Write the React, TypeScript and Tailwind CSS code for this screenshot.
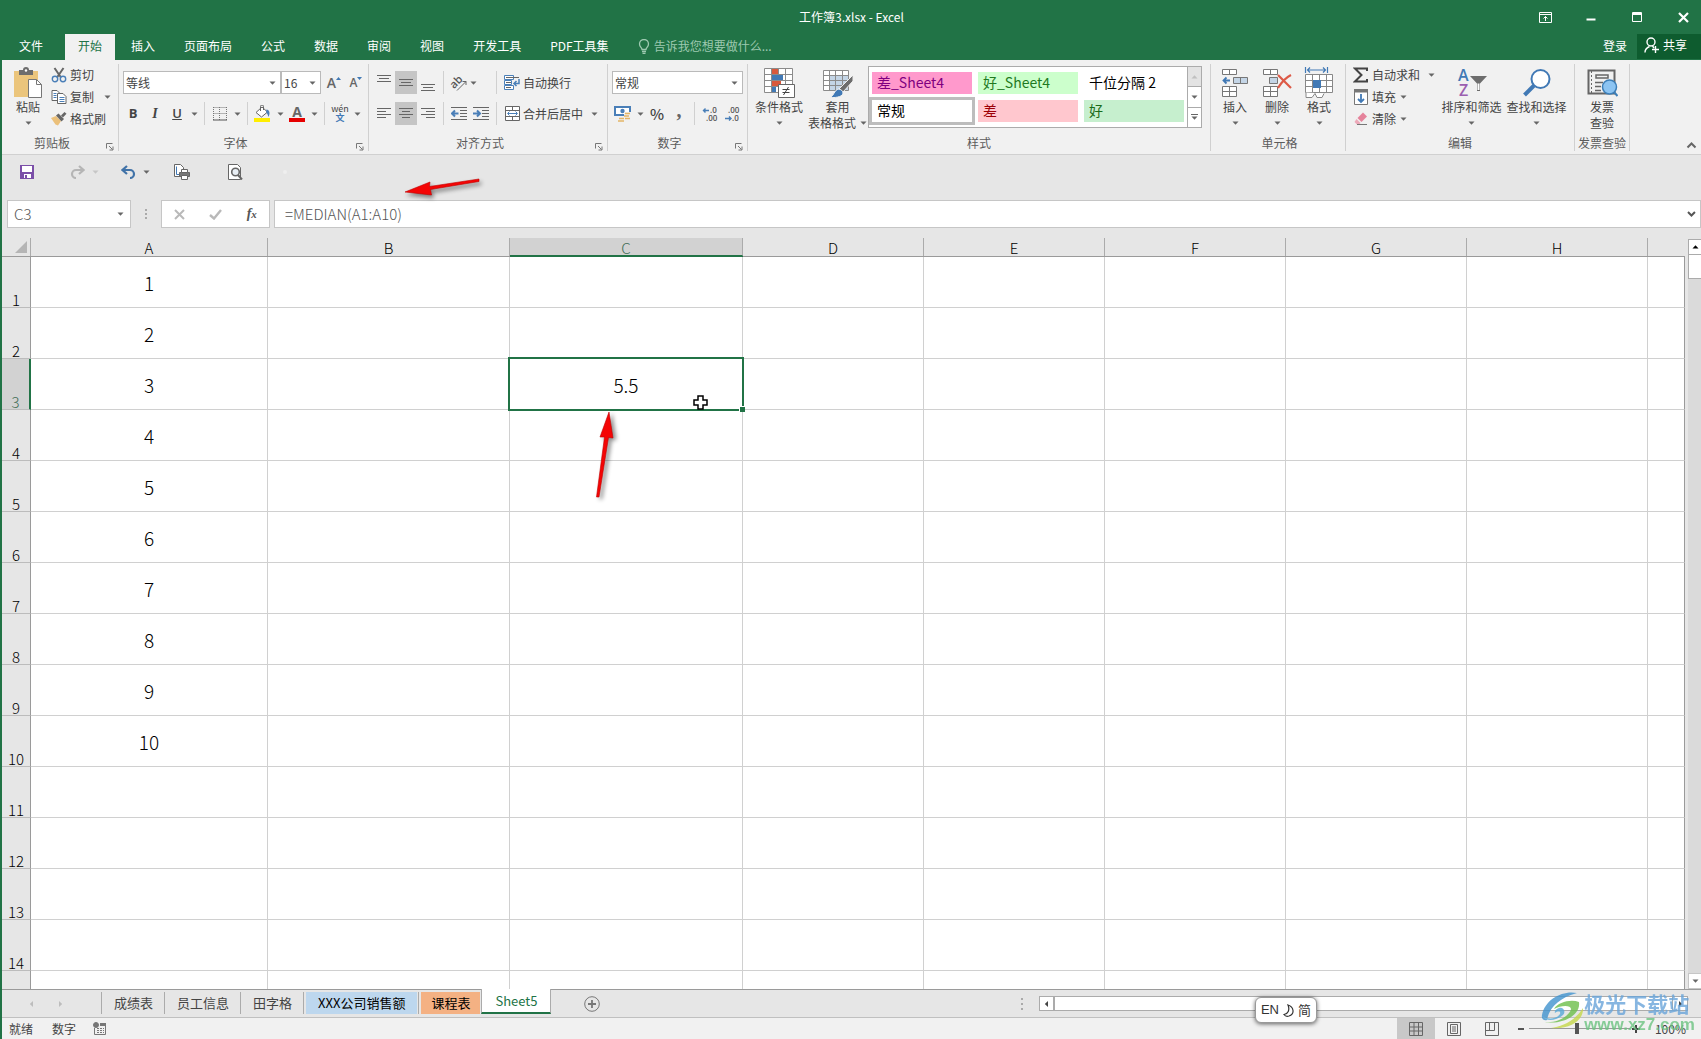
import React, { useState } from "react";
import clsx from "clsx";

const TABS = ["文件", "开始", "插入", "页面布局", "公式", "数据", "审阅", "视图", "开发工具", "PDF工具集"];

const COLUMNS = [
  { id: "A", width: "w-[237px]" },
  { id: "B", width: "w-[242px]" },
  { id: "C", width: "w-[233px]" },
  { id: "D", width: "w-[181px]" },
  { id: "E", width: "w-[181px]" },
  { id: "F", width: "w-[181px]" },
  { id: "G", width: "w-[181px]" },
  { id: "H", width: "w-[181px]" },
  { id: "", width: "" },
];

const ROWS = Array.from({ length: 14 }, (_, i) => i + 1);

const CELLS: Record<string, string> = {
  A1: "1", A2: "2", A3: "3", A4: "4", A5: "5",
  A6: "6", A7: "7", A8: "8", A9: "9", A10: "10",
  C3: "5.5",
};

const STYLES = [
  { name: "差_Sheet4", className: "bg-[#ff99cc] text-[#800080]" },
  { name: "好_Sheet4", className: "bg-[#ccffcc] text-[#1f7a1f]" },
  { name: "千位分隔 2", className: "bg-white text-black" },
  { name: "常规", className: "bg-white text-black outline-3 outline-[#bdbdbd]" },
  { name: "差", className: "bg-[#ffc7ce] text-[#9c0006]" },
  { name: "好", className: "bg-[#c6efce] text-[#1a6b1a]" },
];

const SHEETS = [
  { name: "成绩表", className: "px-[10px]" },
  { name: "员工信息", className: "px-[10px]" },
  { name: "田字格", className: "px-[10px]" },
  { name: "XXX公司销售额", className: "bg-[#bdd7ee] px-3 text-black" },
  { name: "课程表", className: "bg-[#f4b183] px-[10px] text-black" },
];

const Caret = ({ className = "text-[#666]" }: { className?: string }) => (
  <svg width="7" height="4" viewBox="0 0 7 4" className={clsx("shrink-0", className)} fill="currentColor">
    <path d="M0.5 0.5h6L3.5 3.7z" />
  </svg>
);

const Sep = () => <span className="mx-1 h-[23px] w-px shrink-0 bg-[#d0d0d0]" />;

const DropArrow = ({ label }: { label: string }) => (
  <button aria-label={label} className="flex h-[23px] w-3 items-center justify-center">
    <Caret />
  </button>
);

const Tool = ({ label, active, children }: { label: string; active?: boolean; children: React.ReactNode }) => (
  <button
    aria-label={label}
    className={clsx("flex h-[23px] w-[22px] shrink-0 items-center justify-center", active && "bg-[#c5c5c5]")}
  >
    {children}
  </button>
);

const Group = ({
  label,
  launcher,
  className,
  children,
}: {
  label: string;
  launcher?: boolean;
  className?: string;
  children: React.ReactNode;
}) => (
  <section className={clsx("flex shrink-0 flex-col border-r border-[#d0d0d0]", className)}>
    <div className="flex h-[70px]">{children}</div>
    <div className="flex h-[17px] items-center">
      <span className={clsx("flex-1 text-center text-[#5c5c5c]", launcher && "pr-1")}>{label}</span>
      {launcher && (
        <button aria-label={label + "设置"} className="mt-2 w-3">
          <svg width="8" height="8" viewBox="0 0 8 8" fill="none" stroke="#777">
            <path d="M0.5 5.5v-5h6M3 3l3.5 3.5M7 3.5v3.5H3.5" />
          </svg>
        </button>
      )}
    </div>
  </section>
);

const BigButton = ({
  icon,
  label,
  second,
  className,
}: {
  icon: React.ReactNode;
  label: string;
  second?: React.ReactNode;
  className?: string;
}) => (
  <button className={clsx("flex shrink-0 flex-col items-center pt-[3px]", className)}>
    <span className="flex h-8 items-center">{icon}</span>
    <span className="h-4 leading-4 whitespace-nowrap">{label}</span>
    <span className="flex h-[15px] items-center justify-center leading-[15px] whitespace-nowrap">
      {second ?? <Caret />}
    </span>
  </button>
);

const SmallButton = ({ icon, label, arrow }: { icon: React.ReactNode; label: string; arrow?: string }) => (
  <button className="flex h-[22px] items-center whitespace-nowrap">
    <span className="mr-[3px] flex w-4 justify-center">{icon}</span>
    {label}
    {arrow && (
      <span className={arrow}>
        <Caret />
      </span>
    )}
  </button>
);

const Lines = ({ d }: { d: string }) => (
  <svg width="16" height="18" viewBox="0 0 16 18" fill="none" stroke="#666">
    <path d={d} />
  </svg>
);

const PasteIcon = () => (
  <svg width="30" height="32" viewBox="0 0 30 32">
    <path d="M1 4h24v26H1z" fill="#ebc57c" />
    <path d="M6 3h4a3 3 0 0 1 6 0h4v5H6z" fill="#6d6d6d" />
    <circle cx="13" cy="3.5" r="1.2" fill="#fff" />
    <path d="M15.500 12.500h8l5 5v13h-13z" fill="#fff" stroke="#777" />
    <path d="M23.500 12.500v5h5" fill="none" stroke="#777" />
  </svg>
);

const CutIcon = () => (
  <svg width="16" height="16" viewBox="0 0 16 16" fill="none">
    <path d="M3.500 1l6.500 9.500M12.500 1L6 10.500" stroke="#666" strokeWidth="2" />
    <circle cx="4" cy="12" r="2.700" stroke="#4a7fb8" strokeWidth="1.400" />
    <circle cx="12" cy="12" r="2.700" stroke="#4a7fb8" strokeWidth="1.400" />
  </svg>
);

const CopyIcon = () => (
  <svg width="16" height="14" viewBox="0 0 16 14" fill="#fff" stroke="#666">
    <path d="M1 0.500h5l2.500 2.500v7.500H1z" />
    <path d="M2.500 3.500h3M2.500 5.500h3M2.500 7.500h3" stroke="#4a7fb8" />
    <path d="M6.500 3.500h5.500l3 3v7h-8.500z" />
    <path d="M8.500 7.500h5M8.500 9.500h5M8.500 11.500h5" stroke="#4a7fb8" />
  </svg>
);

const BrushIcon = () => (
  <svg width="16" height="14" viewBox="0 0 16 14">
    <path d="M0 6l5-2 5 5-3 4.500-2.500-1z" fill="#ebc07a" />
    <path d="M5 3.500l2.500-2 5.500 5.500-2.500 2.500z" fill="#666" />
    <path d="M10 3.500l3.500-3.500 2 1.800-3.500 3.700z" fill="#666" />
  </svg>
);

const BorderIcon = () => (
  <svg width="14" height="14" viewBox="0 0 14 14" fill="none" stroke="#777">
    <path d="M0.500 0.500h13M0.500 6.500h13M0.500 0v13M6.500 0v13M13.500 0v13" strokeDasharray="1 1" />
    <path d="M0 13h14" stroke="#555" />
  </svg>
);

const FillIcon = () => (
  <svg width="18" height="18" viewBox="0 0 18 18">
    <path d="M0 13h16v4H0z" fill="#ffee00" />
    <path d="M2 7.500L8 2l5.500 5-6 5z" fill="#fff" stroke="#666" />
    <path d="M6.500 6V1.500a1.500 1.500 0 0 1 3 0V5" fill="none" stroke="#666" />
    <path d="M12.500 4.500c3 .5 4 3.500 2 7.500-.8-2-1-3.500-2.500-5z" fill="#4a7fb8" />
  </svg>
);

const FontColorIcon = () => (
  <span className="flex flex-col items-center">
    <span className="font-[Open_Sans] text-sm leading-[13px] font-bold text-[#666]">A</span>
    <span className="h-1 w-4 bg-[#e60000]" />
  </span>
);

const WrapIcon = () => (
  <svg width="16" height="16" viewBox="0 0 16 16" fill="none" stroke="#4a7fb8">
    <path d="M0.500 0.500h9v4h-9zM0.500 5.500h7v4h-7zM0.500 10.500h9v4h-9z" fill="#fff" />
    <path d="M2 2.500h13M2 7.500h5M2 12.500h5" stroke="#666" />
    <path d="M15 4v4.500h-5M12.500 6L10 8.500l2.500 2.500" strokeWidth="1.500" />
  </svg>
);

const MergeIcon = () => (
  <svg width="15" height="15" viewBox="0 0 15 15" fill="none" stroke="#666">
    <path d="M0.500 0.500h14v14h-14z" fill="#fff" />
    <path d="M0.500 4.500h14M0.500 10.500h14M7.500 0.500v4M7.500 10.500v4" />
    <path d="M3 7.500h9M4.500 5.500l-2 2 2 2M10.500 5.500l2 2-2 2" stroke="#4a7fb8" />
  </svg>
);

const IndentIcon = ({ out }: { out?: boolean }) => (
  <svg width="16" height="15" viewBox="0 0 16 15" fill="none" stroke="#666">
    <path d="M0 1.500h16M9 4.500h7M9 7.500h7M9 10.500h7M0 13.500h16" />
    <path d={out ? "M7.500 7.500h-6M4 4.500l-3 3 3 3" : "M0 7.500h6M4 4.500l3 3-3 3"} stroke="#4a7fb8" strokeWidth="2" />
  </svg>
);

const OrientationIcon = () => (
  <svg width="18" height="18" viewBox="0 0 18 18" fill="none" stroke="#666" className="overflow-visible">
    <text x="0" y="12" fontSize="11" fontFamily="Open Sans" fontWeight="600" fill="#555" stroke="none" transform="rotate(-45 6 9)">
      ab
    </text>
    <path d="M7 16.500l9-9M12.500 7.500H16V11" />
  </svg>
);

const MoneyIcon = () => (
  <svg width="18" height="16" viewBox="0 0 18 16">
    <path d="M1 1h15v8H1z" fill="#fff" stroke="#4a7fb8" strokeWidth="2" />
    <circle cx="8.500" cy="5" r="2.200" fill="#4a7fb8" />
    <path d="M10 6h7v10h-7z" fill="#f0f0f0" />
    <path d="M11 7.500h5M10 10h5M11 12.500h5M5 12.500h5M4 15h6" stroke="#e3b567" strokeWidth="1.600" />
  </svg>
);

const DecimalIcon = ({ grow }: { grow?: boolean }) => (
  <svg width="18" height="18" viewBox="0 0 18 18" fontFamily="Open Sans" fontSize="8" fontWeight="600" fill="#555" className="overflow-visible">
    <text x={grow ? 9 : 5} y="8">{grow ? ".0" : ".00"}</text>
    <text x={grow ? 5 : 9} y="16">{grow ? ".00" : ".0"}</text>
    <path
      d={grow ? "M8 5.500H2.500M4.500 3.500l-2 2 2 2" : "M2 13.500h6M6 11.500l2 2-2 2"}
      fill="none"
      stroke="#4a7fb8"
      strokeWidth="1.400"
    />
  </svg>
);

const ConditionalIcon = () => (
  <svg width="32" height="32" viewBox="0 0 32 32">
    <path d="M1.500 1.500h28v24h-28z" fill="#fff" />
    <path d="M9 1.500h6v6H9z" fill="#d9593c" />
    <path d="M9 8h11v5H9z" fill="#4179b5" />
    <path d="M9 13.500h9v6H9z" fill="#d9593c" />
    <path d="M9 19.500h4v6H9z" fill="#4179b5" />
    <path d="M1.500 1.500h28v24h-28zM1.500 7.500h28M1.500 13.500h28M1.500 19.500h28M8.500 1.500v24M15.500 1.500v6M22.500 1.500v24" fill="none" stroke="#8b8b8b" />
    <path d="M15.500 17.500h16v13h-16z" fill="#fff" stroke="#666" />
    <path d="M19.500 22.500h7M19.500 25.500h7M25.500 20l-5 8" stroke="#444" fill="none" />
  </svg>
);

const TableFormatIcon = () => (
  <svg width="32" height="32" viewBox="0 0 32 32">
    <path d="M1.500 3.500h25v20h-25z" fill="#fff" />
    <path d="M7.500 8.500h19v15h-19z" fill="#c4d5e6" />
    <path d="M1.500 3.500h25v20h-25zM1.500 8.500h25M1.500 13.500h25M1.500 18.500h25M7.500 3.500v20M13.500 3.500v20M20.500 3.500v20" fill="none" stroke="#8b8b8b" />
    <path d="M31 8v6L21 25l-4-3z" fill="#6d6d6d" stroke="#f0f0f0" />
    <path d="M16 22c3 0 5 2 5 4 0 3-5 5-13 4.500 4-1.500 4-7 8-8.500z" fill="#4179b5" stroke="#f0f0f0" />
  </svg>
);

const InsertCellsIcon = () => (
  <svg width="28" height="30" viewBox="0 0 28 30" fill="#fff" stroke="#777">
    <path d="M1.500 1.500h14v5h-14zM8.500 1.500v5" />
    <path d="M12.500 9.500h14v6h-14zM19.500 9.500v6" fill="#c4d5e6" />
    <path d="M9 12.500H2.500M5.500 9.500l-3 3 3 3" fill="none" stroke="#4179b5" strokeWidth="1.800" />
    <path d="M1.500 18.500h14v10h-14zM8.500 18.500v10M1.500 23.500h14" />
  </svg>
);

const DeleteCellsIcon = () => (
  <svg width="31" height="30" viewBox="0 0 31 30" fill="#fff" stroke="#777">
    <path d="M1.500 1.500h14v5h-14zM8.500 1.500v5" />
    <path d="M7.500 9.500h8v6h-8z" fill="#c4d5e6" />
    <path d="M1.500 18.500h14v10h-14zM8.500 18.500v10M1.500 23.500h14" />
    <path d="M16 7l13 13M29 7c-6 3-10 8-13 13" fill="none" stroke="#dd5a47" strokeWidth="2.200" />
  </svg>
);

const FormatCellsIcon = () => (
  <svg width="30" height="32" viewBox="0 0 30 32" fill="#fff" stroke="#888">
    <path d="M1.500 7.500h27v18h-27zM1.500 13.500h27M1.500 19.500h27M8.500 7.500v18M15.500 7.500v18M22.500 7.500v18" />
    <path d="M9 13h8v8H9z" fill="#4179b5" stroke="none" />
    <path d="M2 25.500v5h6l3-4 2 4h5l2-4" />
    <path d="M1.500 0v6M23.500 0v6M3 3h19M6 0.500L3.500 3 6 5.500M19 0.500L21.500 3 19 5.500" fill="none" stroke="#4179b5" strokeWidth="1.200" />
  </svg>
);

const SumIcon = () => (
  <svg width="16" height="16" viewBox="0 0 16 16" fill="none" stroke="#444" strokeWidth="2">
    <path d="M14 4V1.500H2L8.500 8 2 14.500h12V12" />
  </svg>
);

const FillDownIcon = () => (
  <svg width="14" height="16" viewBox="0 0 14 16" fill="none">
    <path d="M0.500 1.500h13v14h-13z" fill="#fff" stroke="#777" />
    <path d="M0 0h14v3.500H0z" fill="#777" />
    <path d="M7 5v8M4 10l3 3 3-3" stroke="#4179b5" strokeWidth="1.800" />
  </svg>
);

const EraserIcon = () => (
  <svg width="14" height="14" viewBox="0 0 14 14">
    <path d="M9 0.500l4 4-5.500 5.500-4-4z" fill="#e5839b" />
    <path d="M2.500 7l4 4-1.500 1.500H3L0.500 10z" fill="#eda9b9" />
    <path d="M3 12.500h10" stroke="#777" />
  </svg>
);

const SortFilterIcon = () => (
  <svg width="30" height="30" viewBox="0 0 30 30" fontFamily="Open Sans" fontSize="16" fontWeight="600" className="overflow-visible">
    <text x="1" y="13" fill="#4179b5">A</text>
    <text x="2" y="28" fill="#9b5fb0">Z</text>
    <path d="M13 8h17l-7 7.500V23h-3v-7.500z" fill="#6d6d6d" />
    <path d="M20.500 15.500h2v6.500h-2z" fill="#fff" />
  </svg>
);

const FindIcon = () => (
  <svg width="28" height="30" viewBox="0 0 28 30" fill="none" stroke="#4179b5">
    <circle cx="17.500" cy="11" r="9" fill="#fff" strokeWidth="2" />
    <path d="M11 17.500l-9.500 9.500" strokeWidth="4" />
  </svg>
);

const InvoiceIcon = () => (
  <svg width="31" height="28" viewBox="0 0 31 28" fill="none" stroke="#666">
    <path d="M1.500 1.500h26v23h-26z" strokeWidth="2" />
    <path d="M4.500 2v22" strokeDasharray="2 2" />
    <path d="M9 6h12v3H9z" strokeWidth="1.500" />
    <path d="M8 13.500h8M8 17.500h6M8 21.500h6" strokeWidth="1.500" />
    <circle cx="22.500" cy="18" r="7" fill="#8cc4f2" stroke="#3d7fb8" strokeWidth="1.500" />
    <path d="M27 23l3.500 4" stroke="#3d7fb8" strokeWidth="2" />
  </svg>
);

const SelectBox = ({ label, options, className }: { label: string; options: string[]; className: string }) => (
  <label className={clsx("relative flex h-[23px] items-center border border-[#bababa] bg-white", className)}>
    <select aria-label={label} className="h-full w-full appearance-none bg-transparent pl-[2px] text-[#444] outline-none">
      {options.map((o) => (
        <option key={o}>{o}</option>
      ))}
    </select>
    <span className="pointer-events-none absolute right-1">
      <Caret />
    </span>
  </label>
);

const Watermark = () => (
  <div className="pointer-events-none absolute right-[6px] bottom-1 flex items-center opacity-80">
    <svg width="43" height="40" viewBox="0 0 43 40" className="mb-1">
      <path d="M36 2C22-1 4 8 1 24c-1 4 2 6 5 5C8 16 20 6 36 2z" fill="#4093cf" />
      <path d="M1 25c4 6 14 5 21-1 3-3 1-8-4-7-3 1-5 3-4 5 3-2 6-2 5 1-3 5-12 6-18 2z" fill="#57a8d8" />
      <path d="M38 11c-8-3-21 0-25 7 9-5 22-4 15 4-5 6-14 10-24 9 16 3 36-6 34-20z" fill="#6cbf4b" />
      <path d="M42 17c1 12-13 22-32 20 10-1 24-7 32-20z" fill="#c6d84a" />
    </svg>
    <div>
      <div className="text-[21px] leading-6 font-bold text-[#6aa5da]">极光下载站</div>
      <div className="font-[Liberation_Sans] text-[17px] leading-5 font-bold text-[#6cc381]">www.xz7.com</div>
    </div>
  </div>
);

function TitleBar() {
  const [tab, setTab] = useState("开始");
  return (
    <header className="bg-[#217346] text-white">
      <div className="grid h-[34px] grid-cols-[1fr_auto_1fr] items-center">
        <span />
        <h1>工作簿3.xlsx - Excel</h1>
        <div className="flex justify-end gap-[10px]">
          <button aria-label="功能区显示选项" className="flex w-9 justify-center">
            <svg width="13" height="11" viewBox="0 0 13 11" fill="none" stroke="#fff">
              <path d="M0.500 0.500h12v10H0.500zM0.500 2.500h12M6.500 9V4.500M4.500 6.500l2-2 2 2" />
            </svg>
          </button>
          <button aria-label="最小化" className="flex w-9 justify-center">
            <svg width="10" height="11" viewBox="0 0 10 11"><path d="M0.500 6.500h9v2h-9z" fill="#fff" /></svg>
          </button>
          <button aria-label="最大化" className="flex w-9 justify-center">
            <svg width="10" height="11" viewBox="0 0 10 11" fill="none" stroke="#fff">
              <path d="M0.500 0.500h9v9h-9zM0 1.500h10M0 2.500h10" />
            </svg>
          </button>
          <button aria-label="关闭" className="flex w-9 justify-center">
            <svg width="11" height="11" viewBox="0 0 11 11" stroke="#fff" strokeWidth="2.200">
              <path d="M1 1l9 9M10 1l-9 9" />
            </svg>
          </button>
        </div>
      </div>
      <div className="flex h-[26px] pl-1">
        <nav className="flex gap-[3px]">
          {TABS.map((name) => (
            <button
              key={name}
              onClick={() => setTab(name)}
              className={clsx(
                "px-[13px] pb-[3px] whitespace-nowrap",
                name === "文件" && "mr-[6px]",
                tab === name && "bg-[#f1f1f1] text-[#217346]"
              )}
            >
              {name}
            </button>
          ))}
        </nav>
        <label className="ml-4 flex items-center gap-1 pb-[2px] text-[#9dc9b0]">
          <svg width="12" height="15" viewBox="0 0 12 15" fill="none" stroke="currentColor" strokeWidth="1.300">
            <path d="M4 10.500C4 8.500 1.500 8 1.500 5a4.500 4.500 0 0 1 9 0c0 3-2.500 3.500-2.500 5.500zM4 12.500h4M4.500 14.300h3" />
          </svg>
          <input aria-label="操作说明搜索" placeholder="告诉我您想要做什么..." className="w-40 bg-transparent outline-none placeholder:text-[#9dc9b0]" />
        </label>
        <div className="ml-auto flex">
          <button className="px-[10px] pb-[3px]">登录</button>
          <button className="mb-px flex w-16 items-center gap-1 bg-[#0e5c2f] pb-[3px] pl-[7px]">
            <svg width="15" height="16" viewBox="0 0 15 16" fill="none" stroke="#fff" strokeWidth="1.400">
              <circle cx="7" cy="5" r="4" />
              <path d="M1 15.500c0-3 2-5 4.500-6M8.500 9l1.500 2M8 12.500h7M11.500 9v7" />
            </svg>
            共享
          </button>
        </div>
      </div>
    </header>
  );
}

function Ribbon() {
  return (
    <div className="flex h-[95px] border-b border-[#d0d0d0] bg-[#f1f1f1] pt-1 pb-[3px] text-[#444]">
      <Group label="剪贴板" launcher className="w-[117px]">
        <BigButton icon={<PasteIcon />} label="粘贴" className="ml-[10px] w-8" />
        <div className="ml-[7px] flex flex-col items-start">
          <SmallButton icon={<CutIcon />} label="剪切" />
          <SmallButton icon={<CopyIcon />} label="复制" arrow="ml-[10px]" />
          <SmallButton icon={<BrushIcon />} label="格式刷" />
        </div>
      </Group>

      <Group label="字体" launcher className="w-[250px]">
        <div className="flex flex-col gap-2 px-[3px] pt-[7px]">
          <div className="flex">
            <SelectBox label="字体" options={["等线", "宋体"]} className="ml-px w-[158px]" />
            <SelectBox label="字号" options={["16", "11"]} className="mr-[2px] w-10" />
            <Tool label="增大字号">
              <span className="font-[Open_Sans] text-sm font-semibold text-[#666]">A</span>
              <svg width="5" height="12" viewBox="0 0 5 12" fill="#4179b5"><path d="M0 3h5L2.500 0z" /></svg>
            </Tool>
            <Tool label="减小字号">
              <span className="font-[Open_Sans] text-xs font-semibold text-[#666]">A</span>
              <svg width="5" height="12" viewBox="0 0 5 12" fill="#4179b5"><path d="M0 0h5L2.500 3z" /></svg>
            </Tool>
          </div>
          <div className="flex">
            <Tool label="加粗"><b className="font-[Open_Sans] text-[13px]">B</b></Tool>
            <Tool label="倾斜"><i className="font-[Liberation_Serif] text-sm font-bold">I</i></Tool>
            <Tool label="下划线"><u className="font-[Open_Sans] text-[13px] font-semibold">U</u></Tool>
            <DropArrow label="下划线选项" />
            <Sep />
            <Tool label="边框"><BorderIcon /></Tool>
            <DropArrow label="边框选项" />
            <Sep />
            <Tool label="填充颜色"><FillIcon /></Tool>
            <DropArrow label="填充颜色选项" />
            <Tool label="字体颜色"><FontColorIcon /></Tool>
            <DropArrow label="字体颜色选项" />
            <Sep />
            <Tool label="拼音">
              <span className="flex flex-col items-center">
                <span className="text-[9px] leading-[8px]">wén</span>
                <span className="text-[9px] leading-[9px] font-bold text-[#4179b5]">文</span>
              </span>
            </Tool>
            <DropArrow label="拼音选项" />
          </div>
        </div>
      </Group>

      <Group label="对齐方式" launcher className="w-[239px]">
        <div className="flex flex-col gap-2 pt-[7px] pl-1">
          <div className="flex items-center">
            <Tool label="顶端对齐"><Lines d="M1 1.500h14M3 4.500h10M1 7.500h14" /></Tool>
            <Tool label="垂直居中" active><Lines d="M1 5.500h14M3 8.500h10M1 11.500h14" /></Tool>
            <Tool label="底端对齐"><Lines d="M1 10.500h14M3 13.500h10M1 16.500h14" /></Tool>
            <Sep />
            <Tool label="方向"><OrientationIcon /></Tool>
            <span className="flex w-[22px]"><Caret /></span>
            <Sep />
            <span className="w-[3px]" />
            <SmallButton icon={<WrapIcon />} label="自动换行" />
          </div>
          <div className="flex items-center">
            <Tool label="左对齐"><Lines d="M1 3.500h14M1 6.500h9M1 9.500h14M1 12.500h9" /></Tool>
            <Tool label="居中" active><Lines d="M1 3.500h14M4 6.500h8M1 9.500h14M4 12.500h8" /></Tool>
            <Tool label="右对齐"><Lines d="M1 3.500h14M6 6.500h9M1 9.500h14M6 12.500h9" /></Tool>
            <Sep />
            <Tool label="减少缩进量"><IndentIcon out /></Tool>
            <Tool label="增加缩进量"><IndentIcon /></Tool>
            <Sep />
            <span className="w-[3px]" />
            <SmallButton icon={<MergeIcon />} label="合并后居中" arrow="ml-2" />
          </div>
        </div>
      </Group>

      <Group label="数字" launcher className="w-[140px]">
        <div className="flex flex-col gap-2 pt-[7px] pl-1">
          <SelectBox label="数字格式" options={["常规", "数值"]} className="w-[131px]" />
          <div className="flex">
            <Tool label="会计数字格式"><MoneyIcon /></Tool>
            <DropArrow label="会计格式选项" />
            <Tool label="百分比"><span className="text-[15px] font-medium">%</span></Tool>
            <Tool label="千位分隔"><span className="pb-2 font-[Liberation_Serif] text-xl leading-3 font-bold text-[#666]">,</span></Tool>
            <Sep />
            <Tool label="增加小数位"><DecimalIcon grow /></Tool>
            <Tool label="减少小数位"><DecimalIcon /></Tool>
          </div>
        </div>
      </Group>

      <Group label="样式" className="w-[463px]">
        <BigButton icon={<ConditionalIcon />} label="条件格式" className="ml-[3px] w-14" />
        <BigButton
          icon={<TableFormatIcon />}
          label="套用"
          className="w-[61px]"
          second={<>表格格式<span className="ml-1"><Caret /></span></>}
        />
        <div className="mt-[2px] flex h-[62px] border border-[#ababab] bg-white">
          <div className="grid grid-cols-3 gap-[6px] px-[3px] py-[5px]">
            {STYLES.map((s) => (
              <button key={s.name} className={clsx("h-[22px] w-[100px] pb-[2px] pl-[5px] text-left text-sm leading-5", s.className)}>
                {s.name}
              </button>
            ))}
          </div>
          <div className="flex w-[14px] flex-col border-l border-[#ababab]">
            <button aria-label="上一行" className="flex flex-1 items-center justify-center bg-[#e3e3e3]">
              <Caret className="rotate-180 text-[#c0c0c0]" />
            </button>
            <button aria-label="下一行" className="flex flex-1 items-center justify-center border-y border-[#ababab]"><Caret /></button>
            <button aria-label="其他样式" className="flex flex-1 flex-col items-center justify-center gap-px">
              <span className="h-px w-[7px] bg-[#666]" />
              <Caret />
            </button>
          </div>
        </div>
      </Group>

      <Group label="单元格" className="w-[135px] pl-[3px]">
        <BigButton icon={<InsertCellsIcon />} label="插入" className="w-[42px]" />
        <BigButton icon={<DeleteCellsIcon />} label="删除" className="w-[42px]" />
        <BigButton icon={<FormatCellsIcon />} label="格式" className="w-[42px]" />
      </Group>

      <Group label="编辑" className="w-[229px]">
        <div className="flex w-[93px] flex-col items-start pl-[7px]">
          <SmallButton icon={<SumIcon />} label="自动求和" arrow="ml-2" />
          <SmallButton icon={<FillDownIcon />} label="填充" arrow="ml-1" />
          <SmallButton icon={<EraserIcon />} label="清除" arrow="ml-1" />
        </div>
        <BigButton icon={<SortFilterIcon />} label="排序和筛选" className="w-[65px]" />
        <BigButton icon={<FindIcon />} label="查找和选择" className="w-[65px]" />
      </Group>

      <Group label="发票查验" className="w-[55px]">
        <BigButton icon={<InvoiceIcon />} label="发票" second="查验" className="w-full" />
      </Group>

      <button aria-label="折叠功能区" className="mt-auto mr-1 mb-[2px] ml-auto">
        <svg width="11" height="7" viewBox="0 0 11 7" fill="none" stroke="#666" strokeWidth="2"><path d="M1.500 5.500l4-4 4 4" /></svg>
      </button>
    </div>
  );
}

function QuickAccess() {
  return (
    <div className="relative flex h-[35px] items-center pb-[2px] pl-[18px]">
      <button aria-label="保存">
        <svg width="14" height="14" viewBox="0 0 14 14">
          <path d="M0 0h14v14H0z" fill="#7b4fa8" />
          <path d="M2 1h10v6H2zM4 9h7v4H4z" fill="#fff" />
          <path d="M5 10h2v3H5z" fill="#7b4fa8" />
        </svg>
      </button>
      <button aria-label="恢复" className="ml-9 flex items-center gap-[7px] text-[#b5b5b5]">
        <svg width="15" height="14" viewBox="0 0 15 14" fill="none" stroke="currentColor" strokeWidth="2.200">
          <path d="M13 5H6a4 4 0 0 0 0 8M9 1l4.500 4L9 9" />
        </svg>
        <Caret className="text-[#c6c6c6]" />
      </button>
      <button aria-label="撤消" className="ml-[22px] flex items-center gap-[7px] text-[#4173a8]">
        <svg width="15" height="14" viewBox="0 0 15 14" fill="none" stroke="currentColor" strokeWidth="2.200">
          <path d="M2 5h7a4 4 0 0 1 0 8M6 1L1.500 5 6 9" />
        </svg>
        <Caret />
      </button>
      <button aria-label="打印" className="ml-[23px]">
        <svg width="17" height="16" viewBox="0 0 17 16" fill="#fff" stroke="#666">
          <path d="M1.500 0.500h6l3 3v9h-9z" />
          <path d="M3.500 2.500v8h3" stroke="#4179b5" fill="none" />
          <path d="M6.500 8.500h10v4h-10z" fill="#777" />
          <path d="M8.500 5.500h6v3h-6zM8.500 11.500h6v4h-6z" />
        </svg>
      </button>
      <button aria-label="打印预览" className="ml-[38px]">
        <svg width="15" height="16" viewBox="0 0 15 16" fill="#fff" stroke="#666">
          <path d="M0.500 0.500h9l3 3v12h-12z" />
          <circle cx="7.500" cy="8" r="3.800" fill="#e8eef4" strokeWidth="1.600" />
          <path d="M10 11l4 4.500" strokeWidth="2" />
        </svg>
      </button>
      <span className="ml-10 h-1 w-1 rounded-full bg-[#efefef]" />
      {/* callout pointing at the formula */}
      <svg className="absolute top-[22px] left-[402px] drop-shadow-[2px_3px_2px_rgba(0,0,0,0.45)]" width="78" height="24" viewBox="0 0 78 24">
        <path d="M1 15L26 5l-.5 4.500L75 2v2.500L26.500 12.500l1 5.500z" fill="#f40505" stroke="#c00000" strokeWidth="0.600" />
      </svg>
    </div>
  );
}

function FormulaBar() {
  const [formula, setFormula] = useState("=MEDIAN(A1:A10)");
  return (
    <div className="mt-[10px] flex h-7 items-stretch text-[#555]">
      <label className="ml-[5px] flex w-[124px] items-center border border-[#c6c6c6] bg-white pr-[6px]">
        <input aria-label="名称框" defaultValue="C3" className="w-full min-w-0 bg-transparent pl-[6px] text-[15px] font-light outline-none" />
        <Caret />
      </label>
      <span className="flex w-[30px] flex-col items-center justify-center gap-[2px]">
        <i className="size-[2px] bg-[#aaa]" />
        <i className="size-[2px] bg-[#aaa]" />
        <i className="size-[2px] bg-[#aaa]" />
      </span>
      <div className="flex w-[109px] items-center justify-around border border-[#c6c6c6] bg-white">
        <button aria-label="取消">
          <svg width="11" height="11" viewBox="0 0 11 11" stroke="#b9b9b9" strokeWidth="2"><path d="M1 1l9 9M10 1l-9 9" /></svg>
        </button>
        <button aria-label="输入">
          <svg width="13" height="11" viewBox="0 0 13 11" fill="none" stroke="#b9b9b9" strokeWidth="2.400"><path d="M1 6l4 3.500L12 1" /></svg>
        </button>
        <button aria-label="插入函数" className="font-[Liberation_Serif] text-sm font-bold italic">
          f<span className="text-[11px]">x</span>
        </button>
      </div>
      <label className="ml-1 flex flex-1 items-center border border-[#c6c6c6] bg-white pr-1">
        <input
          aria-label="编辑栏"
          value={formula}
          onChange={(e) => setFormula(e.target.value)}
          className="w-full bg-transparent pl-[10px] text-[15px] font-light outline-none"
        />
        <svg width="9" height="6" viewBox="0 0 9 6" fill="none" stroke="#555" strokeWidth="2"><path d="M1 1l3.500 3.500L8 1" /></svg>
      </label>
    </div>
  );
}

const Selection = () => (
  <>
    <span className="absolute -top-[2px] -right-[2px] -bottom-[2px] -left-[2px] border-2 border-[#217346]" />
    <span className="absolute -right-[3px] -bottom-[3px] size-[6px] border-t border-l border-white bg-[#217346]" />
    <svg className="absolute top-[36px] left-[183px]" width="16" height="16" viewBox="0 0 16 16">
      <path d="M5 1h5v4h4v5h-4v4H5v-4H1V5h4z" fill="#fff" stroke="#000" strokeWidth="1.500" />
    </svg>
    <svg className="absolute top-[52px] left-[84px] drop-shadow-[3px_2px_2px_rgba(0,0,0,0.45)]" width="22" height="88" viewBox="0 0 22 88">
      <path d="M15 1l4 26-4.500-.5L5 86H2.500L10.500 26 6 26z" fill="#f40505" stroke="#c00000" strokeWidth="0.600" />
    </svg>
  </>
);

function Grid() {
  return (
    <div className="mt-px flex min-h-0 flex-1 border-b border-[#9a9a9a]">
      <div className="mr-[3px] min-w-0 flex-1 overflow-hidden">
        <table className="w-full table-fixed border-separate border-spacing-0">
          <thead>
            <tr className="h-7">
              <th aria-label="全选" className="w-[29px] border-b border-[#9a9a9a] p-0 align-bottom">
                <div className="flex h-[18px] justify-end border-r border-[#ababab] pr-[3px]">
                  <svg width="12" height="12" viewBox="0 0 12 12" className="mt-[3px]"><path d="M12 0v12H0z" fill="#b5b5b5" /></svg>
                </div>
              </th>
              {COLUMNS.map((c) => (
                <th
                  key={c.id}
                  scope="col"
                  className={clsx("border-b p-0 align-bottom font-light", c.width, c.id === "C" ? "border-[#217346]" : "border-[#9a9a9a]")}
                >
                  <div
                    className={clsx(
                      "h-[18px] text-[15px] leading-[19px]",
                      c.id && "border-r border-[#ababab]",
                      c.id === "C" ? "border-b border-b-[#217346] bg-[#d2d2d2] text-[#3d6b53]" : "text-black"
                    )}
                  >
                    {c.id}
                  </div>
                </th>
              ))}
            </tr>
          </thead>
          <tbody className="bg-white">
            {ROWS.map((row) => (
              <tr key={row} className="h-[51px]">
                <th
                  scope="row"
                  className={clsx(
                    "border-b border-b-[#bcbcbc] p-0 align-bottom text-[15px] leading-[15px] font-light",
                    row === 3 ? "border-r-2 border-r-[#217346] bg-[#d2d2d2] text-[#3d6b53]" : "border-r border-r-[#9a9a9a] bg-[#e6e6e6] text-black"
                  )}
                >
                  {row}
                </th>
                {COLUMNS.map((c) => {
                  const id = c.id + row;
                  return (
                    <td
                      key={id}
                      className={clsx(
                        "border-b border-[#d0d0d0] p-0 pt-[2px] text-center text-[19px] font-light text-black",
                        c.id ? "border-r" : "border-r border-r-[#9a9a9a]",
                        id === "C3" && "relative z-10"
                      )}
                    >
                      {CELLS[id]}
                      {id === "C3" && <Selection />}
                    </td>
                  );
                })}
              </tr>
            ))}
            <tr className="h-[51px]">
              <th className="border-r border-[#9a9a9a] bg-[#e6e6e6]" />
              {COLUMNS.map((c) => (
                <td key={c.id} className={clsx("border-r", c.id ? "border-[#d0d0d0]" : "border-[#9a9a9a]")} />
              ))}
            </tr>
          </tbody>
        </table>
      </div>
      <div className="mt-[10px] flex w-[13px] flex-col bg-[#dadada]">
        <button aria-label="向上滚动" className="flex h-4 items-center justify-center border border-r-0 border-[#ababab] bg-white">
          <Caret className="rotate-180" />
        </button>
        <div className="h-6 border border-t-0 border-r-0 border-[#ababab] bg-white" />
        <button aria-label="向下滚动" className="mt-auto flex h-4 items-center justify-center border border-r-0 border-[#c6c6c6] bg-white">
          <Caret />
        </button>
      </div>
    </div>
  );
}

function SheetTabs() {
  const [active, setActive] = useState("Sheet5");
  return (
    <div className="flex h-[27px] text-[13px] text-[#444]">
      <div className="flex w-[99px] items-center gap-[22px] pl-[26px] text-[#bdbdbd]">
        <button aria-label="上一个工作表"><Caret className="rotate-90" /></button>
        <button aria-label="下一个工作表"><Caret className="-rotate-90" /></button>
      </div>
      {SHEETS.map((s) => (
        <div key={s.name} className="flex gap-[2px] pt-[2px] pb-[3px]">
          <span className="w-px bg-[#ababab]" />
          <button onClick={() => setActive(s.name)} className={clsx("mr-px whitespace-nowrap", s.className)}>
            {s.name}
          </button>
        </div>
      ))}
      <button
        onClick={() => setActive("Sheet5")}
        className={clsx("-mt-px mb-[3px] px-[13px] text-[#217346]", active === "Sheet5" && "border-x border-b-2 border-x-[#ababab] border-b-[#217346] bg-white")}
      >
        Sheet5
      </button>
      <button aria-label="新工作表" className="ml-[33px]">
        <svg width="16" height="16" viewBox="0 0 16 16" fill="none" stroke="#777">
          <circle cx="8" cy="8" r="7.300" />
          <path d="M8 4v8M4 8h8" strokeWidth="1.800" />
        </svg>
      </button>
      <div className="ml-auto flex w-2/5 min-w-0 items-center pr-[13px]">
        <span className="mr-4 flex flex-col gap-[3px]">
          <i className="size-[2px] bg-[#aaa]" />
          <i className="size-[2px] bg-[#aaa]" />
          <i className="size-[2px] bg-[#aaa]" />
        </span>
        <div className="flex h-[15px] flex-1 border border-[#ababab] bg-white">
          <button aria-label="向左滚动" className="flex w-[15px] items-center justify-center border-r-2 border-[#ababab]">
            <Caret className="rotate-90" />
          </button>
          <button aria-label="向右滚动" className="ml-auto flex w-[15px] items-center justify-center border-l border-[#ababab]">
            <Caret className="-rotate-90" />
          </button>
        </div>
      </div>
    </div>
  );
}

function StatusBar() {
  const [zoom, setZoom] = useState(100);
  return (
    <footer className="flex h-[22px] items-center border-t border-[#c0c0c0] bg-[#f1f1f1] pl-[7px] text-[#444]">
      <span>就绪</span>
      <span className="ml-[19px]">数字</span>
      <button aria-label="录制宏" className="ml-[17px]">
        <svg width="13" height="13" viewBox="0 0 13 13" fill="none" stroke="#777">
          <path d="M1.500 6v6.500h11v-10H7" />
          <path d="M7 2.500h6" strokeWidth="3" />
          <path d="M4 6.500h7M4 8.500h7M4 10.500h7" strokeDasharray="2 1" />
          <circle cx="3" cy="3" r="2.500" fill="#777" />
        </svg>
      </button>
      <div className="ml-auto flex h-full">
        <button aria-label="普通视图" className="flex w-[38px] items-center justify-center bg-[#c8c8c8]">
          <svg width="14" height="14" viewBox="0 0 14 14" fill="none" stroke="#666">
            <path d="M0.500 0.500h13v13h-13zM0.500 5h13M0.500 9h13M5 0.500v13M9.500 0.500v13" />
          </svg>
        </button>
        <button aria-label="页面布局视图" className="flex w-[38px] items-center justify-center">
          <svg width="14" height="14" viewBox="0 0 14 14" fill="none" stroke="#666">
            <path d="M0.500 0.500h13v13h-13zM3.500 2.500h7v9h-7zM5 5h4M5 7h4M5 9h4" />
          </svg>
        </button>
        <button aria-label="分页预览" className="flex w-[38px] items-center justify-center">
          <svg width="14" height="14" viewBox="0 0 14 14" fill="none" stroke="#666">
            <path d="M0.500 0.500h13v13h-13zM4.500 0.500v8M9.500 0.500v8M0.500 8.500h9" />
          </svg>
        </button>
      </div>
      <button aria-label="缩小" className="ml-1 w-3"><span className="mx-auto block h-[2px] w-[6px] bg-[#555]" /></button>
      <input
        type="range"
        aria-label="缩放"
        min={0}
        max={210}
        value={zoom}
        onChange={(e) => setZoom(Number(e.target.value))}
        className="mx-[2px] h-3 w-[101px] appearance-none bg-[linear-gradient(#999,#999)] bg-[length:100%_1px] bg-center bg-no-repeat [&::-webkit-slider-thumb]:h-[11px] [&::-webkit-slider-thumb]:w-1 [&::-webkit-slider-thumb]:appearance-none [&::-webkit-slider-thumb]:bg-[#555]"
      />
      <button aria-label="放大" className="w-3">
        <svg width="8" height="8" viewBox="0 0 8 8" stroke="#444" strokeWidth="2"><path d="M4 0v8M0 4h8" /></svg>
      </button>
      <span className="mr-[15px] w-[42px] text-right">{zoom}%</span>
    </footer>
  );
}

export default function App() {
  return (
    <div className="relative flex h-screen flex-col overflow-hidden border-l-2 border-[#217346] bg-[#e6e6e6] font-['Noto_Sans_CJK_SC',sans-serif] text-xs">
      <TitleBar />
      <Ribbon />
      <QuickAccess />
      <FormulaBar />
      <Grid />
      <SheetTabs />
      <StatusBar />
      {/* input method indicator */}
      <div className="absolute right-[384px] bottom-4 flex h-[26px] items-center gap-1 rounded-md border border-[#999] bg-white px-[5px] text-[13px] text-[#333] shadow-[0_1px_4px_rgba(0,0,0,0.6)]">
        <span className="font-[Liberation_Sans]">EN</span>
        <svg width="11" height="13" viewBox="0 0 11 13" fill="none" stroke="#333" strokeWidth="1.200">
          <path d="M5 1c6 2 7 9 1 11-2 .6-4 0-5-1.500C5 10 7 6 5 1z" />
        </svg>
        <span>简</span>
      </div>
      <Watermark />
    </div>
  );
}
